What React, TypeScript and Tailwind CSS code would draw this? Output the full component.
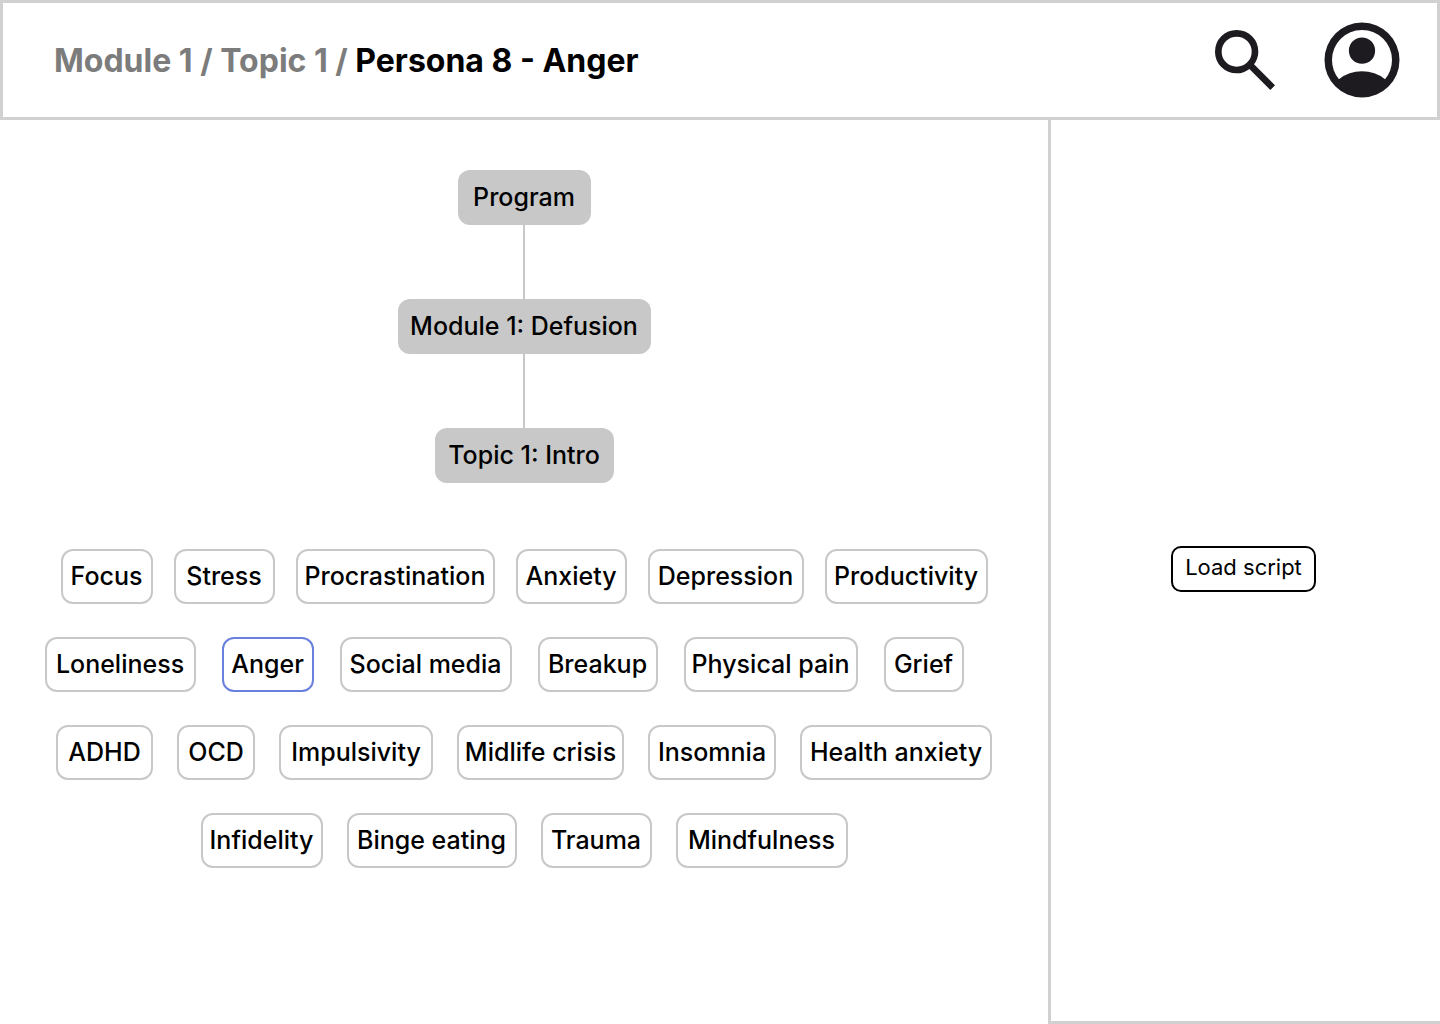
const path = [
  { label: "Program", width: "min-w-[133px]" },
  { label: "Module 1: Defusion", width: "min-w-[253px]" },
  { label: "Topic 1: Intro", width: "min-w-[179px]" },
];

const personaRows = [
  {
    className: "gap-[21px]",
    items: [
      { label: "Focus", width: "min-w-[92px]" },
      { label: "Stress", width: "min-w-[101px]" },
      { label: "Procrastination", width: "min-w-[199px]" },
      { label: "Anxiety", width: "min-w-[111px]" },
      { label: "Depression", width: "min-w-[156px]" },
      { label: "Productivity", width: "min-w-[163px]" },
    ],
  },
  {
    className: "gap-[26px] pr-10",
    items: [
      { label: "Loneliness", width: "min-w-[151px]" },
      { label: "Anger", width: "min-w-[92px]" },
      { label: "Social media", width: "min-w-[172px]" },
      { label: "Breakup", width: "min-w-[120px]" },
      { label: "Physical pain", width: "min-w-[174px]" },
      { label: "Grief", width: "min-w-[80px]" },
    ],
  },
  {
    className: "gap-6",
    items: [
      { label: "ADHD", width: "min-w-[97px]" },
      { label: "OCD", width: "min-w-[78px]" },
      { label: "Impulsivity", width: "min-w-[154px]" },
      { label: "Midlife crisis", width: "min-w-[167px]" },
      { label: "Insomnia", width: "min-w-[128px]" },
      { label: "Health anxiety", width: "min-w-[192px]" },
    ],
  },
  {
    className: "gap-6",
    items: [
      { label: "Infidelity", width: "min-w-[122px]" },
      { label: "Binge eating", width: "min-w-[170px]" },
      { label: "Trauma", width: "min-w-[111px]" },
      { label: "Mindfulness", width: "min-w-[172px]" },
    ],
  },
];

const selected = "Anger";

function SearchIcon() {
  return (
    <svg viewBox="0 -960 960 960" className="size-20" fill="currentColor" aria-hidden="true">
      <path d="M784-120 532-372q-30 24-69 38t-83 14q-109 0-184.5-75.5T120-580q0-109 75.5-184.5T380-840q109 0 184.5 75.5T640-580q0 44-14 83t-38 69l252 252-56 56ZM380-400q75 0 127.5-52.5T560-580q0-75-52.5-127.5T380-760q-75 0-127.5 52.5T200-580q0 75 52.5 127.5T380-400Z" />
    </svg>
  );
}

function AccountIcon() {
  return (
    <svg viewBox="0 -960 960 960" className="size-[90px]" fill="currentColor" aria-hidden="true">
      <path d="M234-276q51-39 114-61.5T480-360q69 0 132 22.5T726-276q35-41 54.5-93T800-480q0-133-93.5-226.5T480-800q-133 0-226.5 93.5T160-480q0 59 19.5 111t54.5 93Zm246-164q-59 0-99.5-40.5T340-580q0-59 40.5-99.5T480-720q59 0 99.5 40.5T620-580q0 59-40.5 99.5T480-440Zm0 360q-83 0-156-31.5T197-197q-54-54-85.5-127T80-480q0-83 31.5-156T197-763q54-54 127-85.5T480-880q83 0 156 31.5T763-763q54 54 85.5 127T880-480q0 83-31.5 156T763-197q-54 54-127 85.5T480-80Z" />
    </svg>
  );
}

export default function App() {
  return (
    <div className="flex min-h-screen flex-col bg-white font-['Inter',sans-serif] text-black">
      <header className="flex h-[120px] items-center justify-between border-[3px] border-[#d1d1d1] pr-[30px] pl-[51px]">
        <nav aria-label="Breadcrumb" className="pt-0.5 text-[32px] font-bold text-[#7c7c7c]">
          <a href="#module-1">Module 1</a> / <a href="#topic-1">Topic 1</a> /{" "}
          <span aria-current="page" className="text-black">
            Persona 8 - Anger
          </span>
        </nav>
        <div className="flex items-center gap-8 text-[#1d1b20]">
          <button type="button" aria-label="Search">
            <SearchIcon />
          </button>
          <button type="button" aria-label="Account">
            <AccountIcon />
          </button>
        </div>
      </header>

      <div className="flex flex-1">
        <main className="flex flex-1 flex-col items-center pt-[50px]">
          {path.map(({ label, width }, i) => (
            <div key={label} className="flex flex-col items-center">
              {i > 0 && <div className="h-[74px] w-[2px] bg-[#c8c8c8]" />}
              <button
                type="button"
                className={`h-[55px] rounded-xl bg-[#c8c8c8] px-2 text-[25px] font-medium whitespace-nowrap ${width}`}
              >
                {label}
              </button>
            </div>
          ))}

          <div className="mt-[66px] flex flex-col items-center gap-[33px]">
            {personaRows.map((row) => (
              <div key={row.items[0].label} className={`flex justify-center ${row.className}`}>
                {row.items.map(({ label, width }) => (
                  <button
                    key={label}
                    type="button"
                    aria-pressed={label === selected}
                    className={`h-[55px] rounded-xl border-2 px-1 text-[25px] font-medium whitespace-nowrap ${width} ${
                      label === selected ? "border-[#6b80dc]" : "border-[#c8c8c8]"
                    }`}
                  >
                    {label}
                  </button>
                ))}
              </div>
            ))}
          </div>
        </main>

        <aside className="flex w-[392px] shrink-0 items-center justify-center border-b-[3px] border-l-[3px] border-[#d1d1d1] pr-1 pb-1">
          <button
            type="button"
            className="h-[46px] rounded-[10px] border-2 border-black px-3 pb-0.5 text-[22px] whitespace-nowrap"
          >
            Load script
          </button>
        </aside>
      </div>
    </div>
  );
}
